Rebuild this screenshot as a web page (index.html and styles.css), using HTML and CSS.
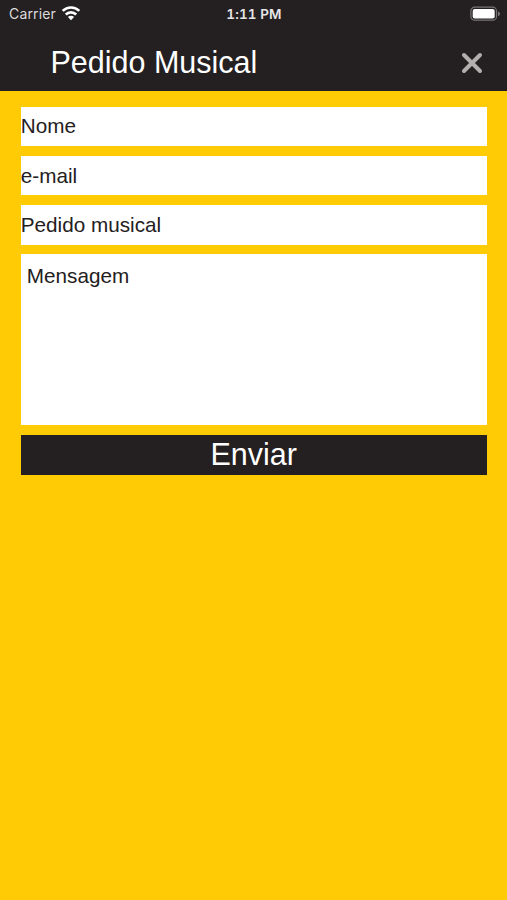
FILE: index.html
```html
<!DOCTYPE html>
<html lang="pt">
<head>
<meta charset="utf-8">
<title>Pedido Musical</title>
<link rel="stylesheet" href="styles.css">
</head>
<body>
<header class="header">
  <div class="status">
    <div class="network">
      <span class="carrier">Carrier</span>
      <svg class="wifi" width="20" height="16" viewBox="0 0 20 16" fill="none" stroke="#fff" stroke-width="2.7">
        <path d="M1.7 5.9a11.8 11.8 0 0 1 16.6 0"/>
        <path d="M4.8 9.5a7.4 7.4 0 0 1 10.4 0"/>
        <path d="M10 15.2 6.9 12a4.4 4.4 0 0 1 6.2 0z" fill="#fff" stroke="none"/>
      </svg>
    </div>
    <span class="time">1:11 PM</span>
    <svg class="battery" width="31" height="16" viewBox="0 0 31 16">
      <rect x=".9" y="1.2" width="25.6" height="13" rx="3.8" fill="none" stroke="#777574" stroke-width="1.2"/>
      <rect x="2.7" y="3" width="22" height="9.4" rx="2" fill="#fff"/>
      <path d="M28 5.2q2.1 1 2.1 2.5T28 10.2z" fill="#777574"/>
    </svg>
  </div>
  <div class="titlebar">
    <h1 class="title">Pedido Musical</h1>
    <button class="close" aria-label="Fechar">
      <svg width="22" height="22" viewBox="0 0 22 22" stroke="#b2b0af" stroke-width="4" stroke-linecap="round">
        <path d="m3 3 16 16M19 3 3 19"/>
      </svg>
    </button>
  </div>
</header>
<form class="form">
  <input class="field" type="text" placeholder="Nome">
  <input class="field" type="text" placeholder="e-mail">
  <input class="field" type="text" placeholder="Pedido musical">
  <textarea class="field message" placeholder="Mensagem"></textarea>
  <button class="send" type="button">Enviar</button>
</form>
</body>
</html>
```

FILE: styles.css
```css
* {
  box-sizing: border-box;
}

body {
  margin: 0;
  min-height: 100vh;
  background: #ffcb05;
  font-family: "Liberation Sans", Arial, sans-serif;
}

.header {
  height: 90.5px;
  background: #242021;
  color: #fff;
}

.status {
  display: grid;
  grid-template-columns: 1fr auto 1fr;
  align-items: center;
  height: 27px;
  padding: 0 6px 0 7px;
  font-family: Inter, sans-serif;
  font-size: 14px;
}

.network {
  display: flex;
  align-items: center;
  gap: 5px;
  padding-left: 2px;
}

.carrier {
  color: #dcdbdb;
  font-size: 14px;
  letter-spacing: 0.15px;
}

.wifi {
  margin-top: -2px;
}

.time {
  color: #e8e7e7;
  font-size: 13.5px;
  font-weight: 600;
  font-feature-settings: "tnum";
  letter-spacing: 0.1px;
}

.battery {
  justify-self: end;
}

.titlebar {
  display: flex;
  align-items: center;
  justify-content: space-between;
  height: 63px;
  padding: 8px 24px 0 50.5px;
}

.title {
  margin: -2px 0 0;
  font-size: 30.5px;
  font-weight: 400;
  line-height: 36px;
}

.close {
  display: flex;
  padding: 0;
  border: 0;
  background: none;
}

.form {
  display: flex;
  flex-direction: column;
  gap: 9.8px;
  padding: 16px 20.4px 0 20.8px;
}

.field {
  display: block;
  width: 100%;
  height: 39.5px;
  margin: 0;
  padding: 0;
  border: 0;
  border-radius: 0;
  outline: 0;
  background: #fff;
  color: #242021;
  font: 20.7px "Liberation Sans", Arial, sans-serif;
  resize: none;
}

.field::placeholder {
  color: #242021;
  opacity: 1;
}

.message {
  height: 171px;
  padding: 10px 6px;
}

.send {
  height: 39.5px;
  padding: 0;
  border: 0;
  background: #242021;
  color: #fff;
  font: 30.5px/39px "Liberation Sans", Arial, sans-serif;
}
```
